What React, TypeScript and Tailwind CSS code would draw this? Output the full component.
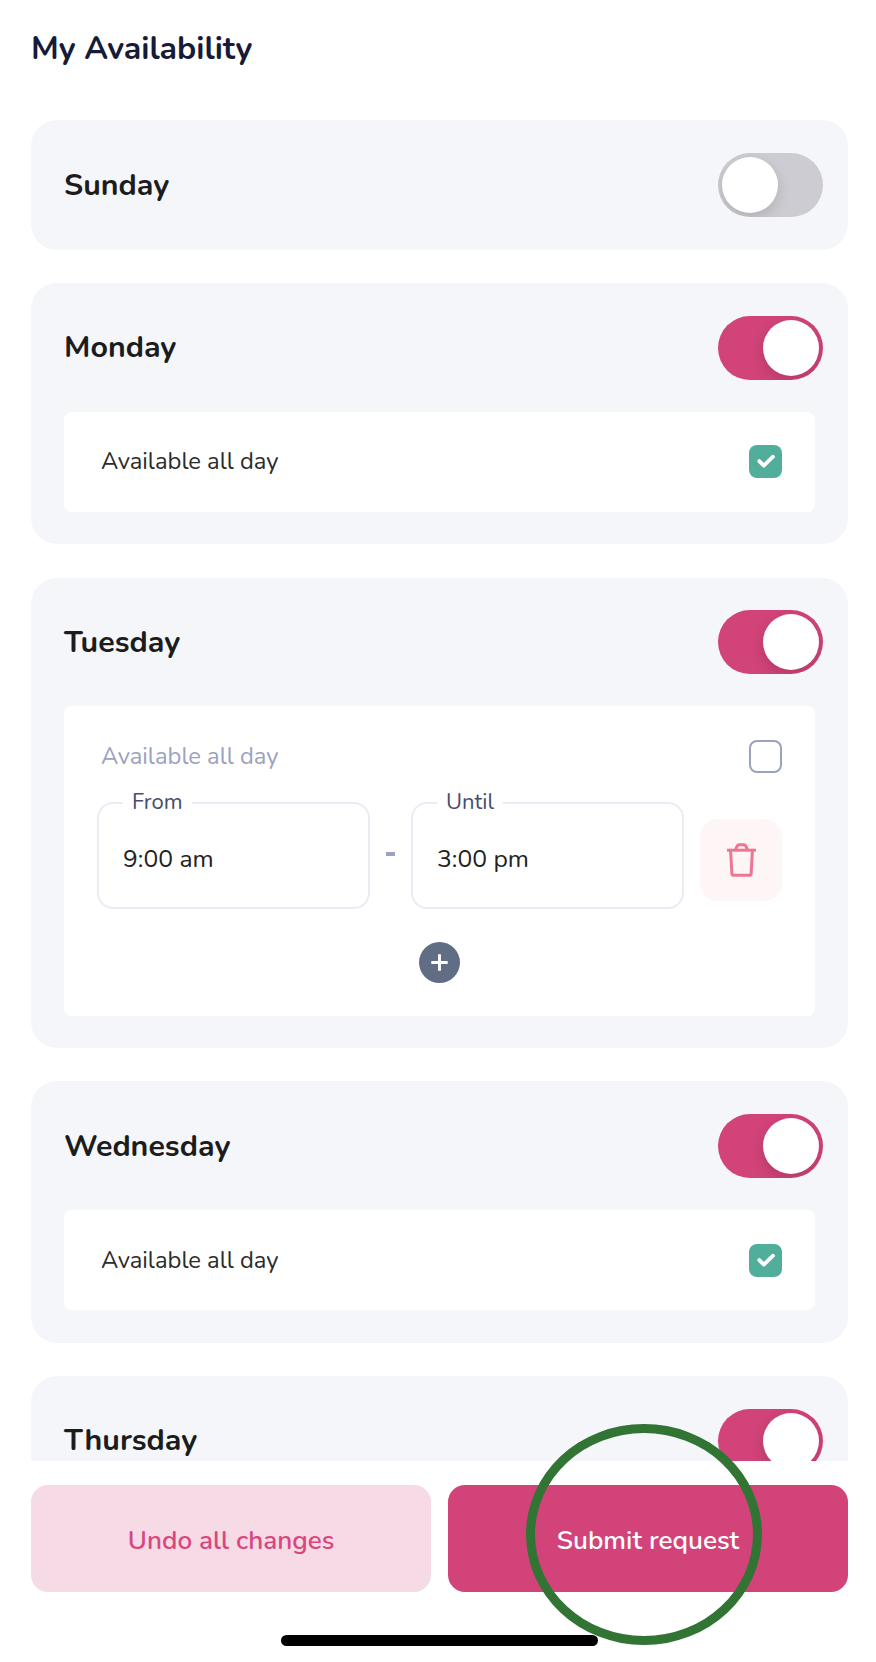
import { useState } from 'react'
import clsx from 'clsx'

type Slot = { from: string; until: string }
type Day = { name: string; enabled: boolean; allDay: boolean; slots: Slot[] }

const initialDays: Day[] = [
  { name: 'Sunday', enabled: false, allDay: false, slots: [] },
  { name: 'Monday', enabled: true, allDay: true, slots: [] },
  { name: 'Tuesday', enabled: true, allDay: false, slots: [{ from: '9:00 am', until: '3:00 pm' }] },
  { name: 'Wednesday', enabled: true, allDay: true, slots: [] },
  { name: 'Thursday', enabled: true, allDay: false, slots: [] },
]

function Toggle({ on, onClick }: { on: boolean; onClick: () => void }) {
  return (
    <button
      role="switch"
      aria-checked={on}
      onClick={onClick}
      className={clsx(
        'flex h-16 w-[105px] shrink-0 items-center overflow-hidden rounded-full px-1',
        on ? 'justify-end bg-[#d14379]' : 'justify-start bg-[#cdccd2]'
      )}
    >
      <span className="size-14 rounded-full bg-white shadow-[0_5px_14px_rgba(0,0,0,0.14)]" />
    </button>
  )
}

function Checkbox({ checked, onClick }: { checked: boolean; onClick: () => void }) {
  return (
    <button
      role="checkbox"
      aria-checked={checked}
      onClick={onClick}
      className={clsx(
        'flex size-[33px] items-center justify-center rounded-lg',
        checked ? 'bg-[#51ae9b]' : 'border-2 border-[#9ba2c0] bg-white'
      )}
    >
      {checked && (
        <svg viewBox="0 0 33 33" className="size-[33px]" fill="none" stroke="#fff" strokeWidth="3.8" strokeLinecap="round" strokeLinejoin="round">
          <path d="M10.3 16.1 14.8 20.6 24 11.7" />
        </svg>
      )}
    </button>
  )
}

function TimeField({ label, value }: { label: string; value: string }) {
  return (
    <div className="relative flex h-[107px] w-[273px] items-center rounded-2xl border-2 border-[#ebebf4] px-6 pt-[9px]">
      <span className="absolute -top-[18px] left-6 bg-white px-[9px] text-[22px] leading-8 text-[#454d6b]">{label}</span>
      <span className="text-[24.7px] text-[#222]">{value}</span>
    </div>
  )
}

function TrashIcon() {
  return (
    <svg viewBox="0 0 29 34" className="h-[34px] w-[29px]" fill="none" stroke="#ee7692" strokeWidth="3" strokeLinejoin="round">
      <path d="M0 7.2h29" />
      <path d="M8.4 7 9.6 4.2C10.3 2.5 11 1.7 12 1.7h5c1 0 1.7.8 2.4 2.5L20.6 7" />
      <path d="M3.6 7.5 4.9 30.8c.1.9.6 1.4 1.4 1.4h16.4c.8 0 1.3-.5 1.4-1.4L25.4 7.5" />
    </svg>
  )
}

function SlotRow({ slot }: { slot: Slot }) {
  return (
    <div className="mt-[29px] flex items-center">
      <TimeField label="From" value={slot.from} />
      <div className="flex w-[41px] justify-center pb-1">
        <span className="h-1 w-[9px] bg-[#9ba2c0]" />
      </div>
      <TimeField label="Until" value={slot.until} />
      <button aria-label="Remove" className="mt-2 ml-4 flex size-[82px] items-center justify-center rounded-[18px] bg-[#fef5f6]">
        <TrashIcon />
      </button>
    </div>
  )
}

export default function App() {
  const [days, setDays] = useState(initialDays)

  const update = (name: string, patch: Partial<Day>) => {
    setDays(days.map(d => (d.name === name ? { ...d, ...patch } : d)))
  }

  return (
    <div className="relative flex h-[1662px] w-[876px] flex-col overflow-hidden bg-white font-[Nunito,Lato,sans-serif]">
      <div className="flex h-[1461px] flex-col overflow-hidden pt-[29px] pr-7 pl-[31px]">
        <h1 className="h-[91.4px] shrink-0 text-[32px] leading-10 font-bold text-[#161b37]">My Availability</h1>

        <div className="flex flex-col gap-[33.2px]">
          {days.map(day => (
            <section key={day.name} className="rounded-[26px] bg-[#f4f6fa] px-[33px] pt-[32.8px] pb-[32.4px]">
              <div className="-mr-2 flex items-center justify-between">
                <h2 className="pb-px text-[30.4px] leading-10 font-bold text-[#1c1c1c]">{day.name}</h2>
                <Toggle on={day.enabled} onClick={() => update(day.name, { enabled: !day.enabled })} />
              </div>

              {day.enabled && (day.allDay || day.slots.length > 0) && (
                <div className="mt-8 rounded-lg bg-white px-[33px] py-[33.7px]">
                  <div className="flex h-[33px] items-center justify-between pl-1">
                    <span className={clsx('pt-px text-[23.8px]', day.allDay ? 'text-[#2b2b2b]' : 'text-[#9ba2c0]')}>Available all day</span>
                    <Checkbox checked={day.allDay} onClick={() => update(day.name, { allDay: !day.allDay })} />
                  </div>

                  {!day.allDay && (
                    <>
                      {day.slots.map((slot, i) => (
                        <SlotRow key={i} slot={slot} />
                      ))}
                      <div className="mt-[33px] -mb-px flex justify-center">
                        <button aria-label="Add" className="flex size-[41px] items-center justify-center rounded-full bg-[#616d84]">
                          <svg viewBox="0 0 17 17" className="size-[17px]" stroke="#fff" strokeWidth="2.9">
                            <path d="M8.5.3v16.4M.3 8.5h16.4" />
                          </svg>
                        </button>
                      </div>
                    </>
                  )}
                </div>
              )}
            </section>
          ))}
        </div>
      </div>

      {/* Footer actions */}
      <div className="flex gap-[16.6px] pt-6 pr-7 pl-[31px]">
        <button className="h-[107px] flex-1 rounded-[17px] bg-[#f6dae6] pt-1 text-[26.1px] font-semibold text-[#d9477f]">Undo all changes</button>
        <button className="h-[107px] flex-1 rounded-[17px] bg-[#d14379] pt-1 text-[26.2px] font-semibold text-white">Submit request</button>
      </div>
      <div className="mt-[43px] ml-[281px] h-[11px] w-[317px] rounded-full bg-black" />

      {/* Highlight around the submit button */}
      <div className="pointer-events-none absolute top-[1424px] left-[526px] h-[221px] w-[236px] rounded-[50%] border-9 border-[#317433]" />
    </div>
  )
}
